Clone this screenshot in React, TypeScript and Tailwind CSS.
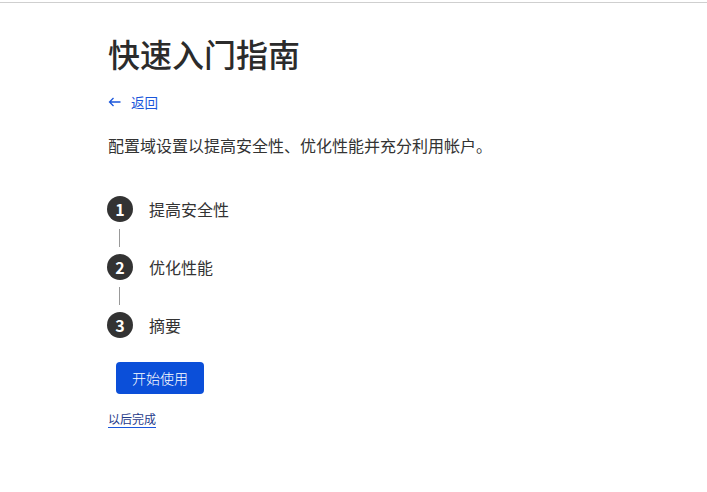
import React from "react";

const steps = ["提高安全性", "优化性能", "摘要"];

const App = () => {
  return (
    <div
      className="w-full min-h-[492px] bg-white text-[#333]"
      style={{ fontFamily: '"Noto Sans CJK SC", "Noto Sans", sans-serif' }}
    >
      <div className="pt-[2px]">
        <div className="border-t border-[#cfcfcf]" />
      </div>

      <div className="pl-[108px] pt-[30px]">
        {/* Title */}
        <h1 className="text-[32px] leading-[40px] font-medium text-[#2b2b2b]">快速入门指南</h1>

        {/* Back */}
        <a className="mt-[19px] flex items-center gap-[10px] text-[13.5px] leading-[20px] text-[#1a56db]">
          <svg width="13" height="10" viewBox="0 0 13 10" fill="none" stroke="currentColor" strokeWidth="1.3">
            <path d="M12.5 5H1.5M5.5 1L1.5 5L5.5 9" />
          </svg>
          <span>返回</span>
        </a>

        {/* Description */}
        <p className="mt-[21px] text-[16px] leading-[24px] text-[#333]">
          配置域设置以提高安全性、优化性能并充分利用帐户。
        </p>

        {/* Steps */}
        <div className="mt-[39px] flex flex-col">
          {steps.map((s, i) => (
            <div key={s}>
              {i > 0 && (
                <div className="w-[26px] flex justify-center py-[7px] -ml-[2px]">
                  <div className="w-px h-[18px] bg-[#999]" />
                </div>
              )}
              <div className="flex items-center gap-[16px] -ml-px">
                <div className="w-[26px] h-[26px] rounded-full bg-[#333] text-white flex items-center justify-center text-[16px] font-bold">
                  {i + 1}
                </div>
                <span className="text-[16px] leading-[24px]">{s}</span>
              </div>
            </div>
          ))}
        </div>

        {/* Start */}
        <button className="mt-[24px] ml-[8px] w-[88px] h-[32px] rounded-[4px] bg-[#0b4fd9] text-white text-[14px] font-light">
          开始使用
        </button>

        <div className="mt-[11px]">
          <a className="text-[12px] leading-[18px] text-[#1f3a8a] underline decoration-[#1a56db] underline-offset-[3px]">
            以后完成
          </a>
        </div>
      </div>
    </div>
  );
};

export default App;
